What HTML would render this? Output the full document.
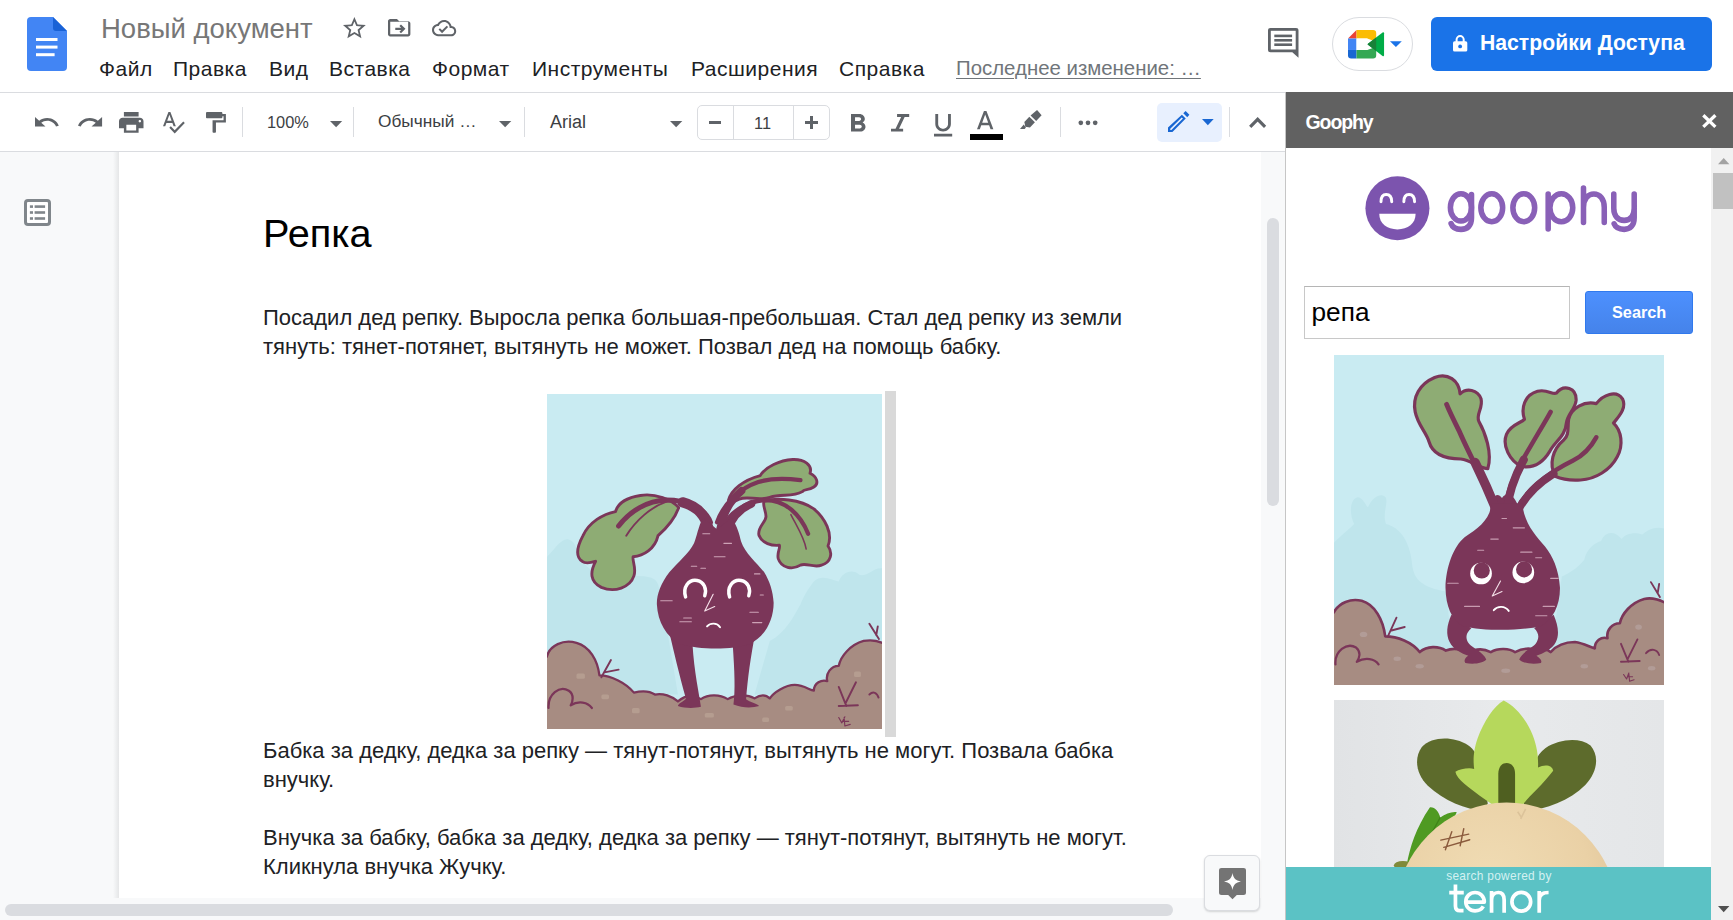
<!DOCTYPE html>
<html lang="ru">
<head>
<meta charset="utf-8">
<title>Новый документ – Google Документы</title>
<style>
*{box-sizing:border-box;margin:0;padding:0}
html,body{width:1733px;height:920px;overflow:hidden;background:#fff}
body{font-family:"Liberation Sans",sans-serif;color:#202124;position:relative}
.abs{position:absolute}
.t{position:absolute;white-space:nowrap;line-height:1}
svg{position:absolute;overflow:visible}
/* header */
#hdr{left:0;top:0;width:1733px;height:93px;background:#fff;border-bottom:1px solid #dadce0}
#title{left:101px;top:15px;font-size:27.5px;color:#777}
.menu{top:58px;font-size:21px;color:#202124;letter-spacing:.5px}
#last{left:956px;top:58px;font-size:20.4px;color:#70757a;text-decoration:underline;text-decoration-thickness:1px;text-underline-offset:3px}
#meet{left:1332px;top:17px;width:81px;height:54px;border:1px solid #dadce0;border-radius:27px;background:#fff}
#share{left:1431px;top:17px;width:281px;height:54px;background:#1a73e8;border-radius:6px}
#sharetxt{left:1480px;top:32px;font-size:21.2px;font-weight:700;color:#fff}
/* toolbar */
#tb{left:0;top:93px;width:1286px;height:59px;background:#fff;border-bottom:1px solid #dadce0}
.sep{width:1px;top:107px;height:30px;background:#dadce0}
.tbt{top:113px;color:#3c4043}
#fsbox{left:697px;top:105px;width:133px;height:35px;border:1px solid #dadce0;border-radius:5px}
#fsbox i{position:absolute;top:0;width:1px;height:33px;background:#dadce0}
#editbtn{left:1157px;top:103px;width:65px;height:39px;background:#e8f0fe;border-radius:5px}
/* doc area */
#bg{left:0;top:152px;width:1286px;height:768px;background:#f8f9fa}
#page{left:119px;top:152px;width:1142px;height:746px;background:#fff}
#pgsh{left:113px;top:152px;width:6px;height:746px;background:linear-gradient(90deg,rgba(60,64,67,0),rgba(60,64,67,.10))}
#vthumb{left:1267px;top:218px;width:12px;height:288px;background:#dadce0;border-radius:6px}
#hthumb{left:5px;top:904px;width:1168px;height:12px;background:#dadce0;border-radius:6px}
#h1{left:263px;top:214px;font-size:39.7px;color:#000}
.p{left:263px;font-size:22px;color:#202124;letter-spacing:-.003px}
#sel{left:885px;top:391px;width:11px;height:346px;background:#d9d9d9}
#explore{left:1204px;top:855px;width:56px;height:56px;background:#f8f9fa;border:1px solid #dadce0;border-radius:6px;box-shadow:0 1px 2px rgba(60,64,67,.2)}
/* sidebar */
#sb{left:1285px;top:92px;width:448px;height:828px;background:#fff;border-left:1px solid #c6c6c6}
#sbh{left:1286px;top:92px;width:447px;height:56px;background:#616161}
#sbt{left:1305.5px;top:112.5px;font-size:19.5px;font-weight:700;color:#fff;letter-spacing:-1.1px}
#sbscroll{left:1711px;top:148px;width:22px;height:772px;background:#f1f1f1}
#sbthumb{left:1713px;top:173px;width:20px;height:35.700px;background:#c1c1c1}
#inp{left:1304px;top:286px;width:266px;height:53px;border:1px solid #c8c8c8;border-top-color:#b5b5b5;background:#fff}
#inptxt{left:1311.5px;top:299px;font-size:26.25px;color:#000}
#sbtn{left:1585px;top:291px;width:108px;height:43px;background:linear-gradient(#4d90fe,#4583ea);border:1px solid #3079ed;border-radius:3px}
#sbtntxt{left:1612px;top:304px;font-size:16.3px;font-weight:700;color:#fff}
#tenor{left:1286px;top:867px;width:425px;height:53px;background:#5bc2c5}
#tn1{left:1446px;top:870.5px;width:106px;text-align:center;font-size:11.9px;color:#d4f1f1;letter-spacing:.3px}
#tn2{left:1447px;top:873px;font-size:44px;color:#fff;letter-spacing:-.6px}
</style>
</head>
<body>
<!-- ===== header ===== -->
<div id="hdr" class="abs"></div>
<div id="title" class="t">Новый документ</div>
<div class="t menu" style="left:99px">Файл</div>
<div class="t menu" style="left:173px">Правка</div>
<div class="t menu" style="left:269px">Вид</div>
<div class="t menu" style="left:329px">Вставка</div>
<div class="t menu" style="left:432px">Формат</div>
<div class="t menu" style="left:532px">Инструменты</div>
<div class="t menu" style="left:691px">Расширения</div>
<div class="t menu" style="left:839px">Справка</div>
<div id="last" class="t">Последнее изменение: …</div>
<div id="meet" class="abs"></div>
<div id="share" class="abs"></div>
<div id="sharetxt" class="t">Настройки Доступа</div>
<!-- HEADER-ICONS-START -->
<!-- docs logo -->
<svg style="left:27px;top:17px" width="40" height="54" viewBox="0 0 40 54"><path d="M4 0H26L40 14V50a4 4 0 0 1-4 4H4a4 4 0 0 1-4-4V4a4 4 0 0 1 4-4Z" fill="#4285f4"/><path d="M26 0L40 14H29a3 3 0 0 1-3-3Z" fill="#1a62d6"/><rect x="9" y="21" width="21.5" height="3" fill="#fff"/><rect x="9" y="28.6" width="21.5" height="3" fill="#fff"/><rect x="9" y="36.2" width="18.6" height="3" fill="#fff"/></svg>
<!-- star -->
<svg style="left:343px;top:16.8px" width="22.8" height="21.3" viewBox="2 2 20 19" preserveAspectRatio="none"><path fill="#5f6368" d="M22 9.24l-7.19-.62L12 2 9.19 8.63 2 9.24l5.46 4.73L5.82 21 12 17.27 18.18 21l-1.63-7.03L22 9.24zM12 15.4l-3.76 2.27 1-4.28-3.32-2.88 4.38-.38L12 6.1l1.71 4.04 4.38.38-3.32 2.88 1 4.28L12 15.4z"/></svg>
<!-- move folder -->
<svg style="left:387.6px;top:18.7px" width="22.4" height="17.5" viewBox="2 4 20 16" preserveAspectRatio="none"><path fill="#5f6368" d="M20 6h-8l-2-2H4c-1.1 0-2 .9-2 2v12c0 1.1.9 2 2 2h16c1.1 0 2-.9 2-2V8c0-1.1-.9-2-2-2zm0 12H4V6.5h16V18zM12.2 15.6l1.4 1.4 4-4-4-4-1.4 1.4 1.6 1.6H8.5v2h5.3l-1.6 1.6z"/></svg>
<!-- cloud done -->
<svg style="left:432.4px;top:20px" width="24.2" height="16.2" viewBox="0 4 24 16" preserveAspectRatio="none"><path fill="#5f6368" d="M19.35 10.04C18.67 6.59 15.64 4 12 4 9.11 4 6.6 5.64 5.35 8.04 2.34 8.36 0 10.91 0 14c0 3.31 2.69 6 6 6h13c2.76 0 5-2.24 5-5 0-2.64-2.05-4.78-4.65-4.96zM19 18H6c-2.21 0-4-1.79-4-4s1.79-4 4-4h.71C7.37 7.69 9.48 6 12 6c3.04 0 5.5 2.46 5.5 5.5v.5H19c1.66 0 3 1.34 3 3s-1.34 3-3 3zm-9-3.82l-2.09-2.09L6.5 13.5 10 17l6.01-6.01-1.41-1.41z"/></svg>
<!-- comments -->
<svg style="left:1267.7px;top:28.2px" width="30.5" height="29.8" viewBox="0 0 30.5 29.8"><path d="M2.5 0H28a2.5 2.5 0 0 1 2.5 2.5V29.8L24.3 24.3H2.5A2.5 2.5 0 0 1 0 21.8V2.5A2.5 2.5 0 0 1 2.5 0Z" fill="#5f6368"/><rect x="2.8" y="2.8" width="24.9" height="18.7" fill="#fff"/><rect x="6.3" y="6.6" width="17.8" height="2.6" fill="#5f6368"/><rect x="6.3" y="11" width="17.8" height="2.6" fill="#5f6368"/><rect x="6.3" y="15.4" width="17.8" height="2.6" fill="#5f6368"/></svg>
<!-- meet -->
<svg style="left:1348px;top:30px" width="36.1" height="28.5" viewBox="733 158 284 224" preserveAspectRatio="none">
<path d="M733 225L800 158V225Z" fill="#ea4335"/>
<path d="M800 158H930a25 25 0 0 1 25 25V250L885 225H800Z" fill="#fbbc04"/>
<rect x="733" y="225" width="67" height="90" fill="#4285f4"/>
<path d="M733 315H800V382H758a25 25 0 0 1-25-25Z" fill="#1967d2"/>
<path d="M800 315H885L955 290V357a25 25 0 0 1-25 25H800Z" fill="#34a853"/>
<path d="M885 270L1005 178a8 8 0 0 1 12 6V356a8 8 0 0 1-12 6Z" fill="#00ac47"/>
<path d="M885 270L955 216V324Z" fill="#188038"/>
<rect x="800" y="225" width="85" height="90" fill="#fff"/>
</svg>
<svg style="left:1390.2px;top:40.8px" width="11.8" height="6.2" viewBox="0 0 12 6"><path d="M0 0H12L6 6Z" fill="#1a73e8"/></svg>
<!-- lock -->
<svg style="left:1452.7px;top:35.4px" width="14.3" height="16.5" viewBox="0 0 14.3 16.5"><path d="M3.6 7V4.6a3.55 3.55 0 0 1 7.1 0V7" fill="none" stroke="#fff" stroke-width="2"/><rect x="0" y="6.3" width="14.3" height="10.2" rx="1.6" fill="#fff"/><circle cx="7.15" cy="11.4" r="1.9" fill="#1a73e8"/></svg>
<!-- HEADER-ICONS-END -->

<!-- ===== toolbar ===== -->
<div id="tb" class="abs"></div>
<div class="abs sep" style="left:242px"></div>
<div class="abs sep" style="left:353px"></div>
<div class="abs sep" style="left:524px"></div>
<div class="abs sep" style="left:1060px"></div>
<div class="abs sep" style="left:1229px"></div>
<div class="t tbt" style="left:267px;top:114px;font-size:16.4px">100%</div>
<div class="t tbt" style="left:378px;font-size:17.3px">Обычный …</div>
<div class="t tbt" style="left:550px;font-size:18px">Arial</div>
<div id="fsbox" class="abs"><i style="left:35px"></i><i style="left:95px"></i></div>
<div class="t tbt" style="left:754px;top:115px;font-size:16.4px">11</div>
<div id="editbtn" class="abs"></div>
<!-- TOOLBAR-ICONS-START -->
<!-- undo -->
<svg style="left:35.2px;top:116.9px" width="23.8" height="10.1" viewBox="2 7 20.5 9.5" preserveAspectRatio="none"><path fill="#5f6368" d="M12.5 8c-2.65 0-5.05.99-6.9 2.6L2 7v9h9l-3.62-3.62c1.39-1.16 3.16-1.88 5.12-1.88 3.54 0 6.55 2.31 7.6 5.5l2.37-.78C21.08 11.03 17.15 8 12.5 8z"/></svg>
<!-- redo -->
<svg style="left:77.7px;top:116.9px" width="24.1" height="10.1" viewBox="1.5 7 20.5 9.5" preserveAspectRatio="none"><path fill="#5f6368" d="M18.4 10.6C16.55 8.99 14.15 8 11.5 8c-4.65 0-8.58 3.03-9.96 7.22L3.9 16c1.05-3.19 4.05-5.5 7.6-5.5 1.95 0 3.73.72 5.12 1.88L13 16h9V7l-3.6 3.6z"/></svg>
<!-- print -->
<svg style="left:119.2px;top:112px" width="24.5" height="20.8" viewBox="2 3 20 18" preserveAspectRatio="none"><path fill="#5f6368" d="M19 8H5c-1.66 0-3 1.34-3 3v6h4v4h12v-4h4v-6c0-1.66-1.34-3-3-3zm-3 11H8v-5h8v5zm3-7c-.55 0-1-.45-1-1s.45-1 1-1 1 .45 1 1-.45 1-1 1zm-1-9H6v4h12V3z"/></svg>
<!-- spellcheck -->
<svg style="left:163.4px;top:112.4px" width="21.8" height="21.4" viewBox="2.46 3 20.54 19.5" preserveAspectRatio="none"><path fill="#5f6368" d="M12.45 16h2.09L9.43 3H7.57L2.46 16h2.09l1.12-3h5.64l1.14 3zm-6.02-5L8.5 5.48 10.57 11H6.43zm15.16.59l-8.09 8.09L9.83 16l-1.41 1.41 5.09 5.09L23 13l-1.41-1.41z"/></svg>
<!-- paint format -->
<svg style="left:206.3px;top:112px" width="19.9" height="20.8" viewBox="4 2 17 20" preserveAspectRatio="none"><path fill="#5f6368" d="M18 4V3c0-.55-.45-1-1-1H5c-.55 0-1 .45-1 1v4c0 .55.45 1 1 1h12c.55 0 1-.45 1-1V6h1v4H9.600v11c0 .55.45 1 1 1h.900c.55 0 1-.45 1-1v-9H21V4h-3z"/></svg>
<!-- dropdown arrows -->
<svg style="left:329.5px;top:120.5px" width="12.2" height="6.2" viewBox="0 0 12 6" preserveAspectRatio="none"><path d="M0 0H12L6 6Z" fill="#5f6368"/></svg>
<svg style="left:498.7px;top:120.5px" width="12.3" height="6.2" viewBox="0 0 12 6" preserveAspectRatio="none"><path d="M0 0H12L6 6Z" fill="#5f6368"/></svg>
<svg style="left:669.5px;top:120.5px" width="12.3" height="6.2" viewBox="0 0 12 6" preserveAspectRatio="none"><path d="M0 0H12L6 6Z" fill="#5f6368"/></svg>
<!-- minus / plus -->
<div class="abs" style="left:709px;top:121px;width:12px;height:2.6px;background:#5f6368"></div>
<div class="abs" style="left:805px;top:121px;width:12.7px;height:2.6px;background:#5f6368"></div>
<div class="abs" style="left:810px;top:116px;width:2.6px;height:12.7px;background:#5f6368"></div>
<!-- B -->
<svg style="left:850.8px;top:114px" width="14.5" height="17.6" viewBox="7 4 10.75 14" preserveAspectRatio="none"><path fill="#5f6368" d="M15.6 10.79c.97-.67 1.65-1.77 1.65-2.79 0-2.26-1.75-4-4-4H7v14h7.04c2.09 0 3.71-1.7 3.71-3.79 0-1.52-.86-2.82-2.15-3.42zM10 6.5h3c.83 0 1.5.67 1.5 1.5s-.67 1.5-1.5 1.5h-3v-3zm3.5 9H10v-3h3.5c.83 0 1.5.67 1.5 1.5s-.67 1.5-1.5 1.5z"/></svg>
<!-- I -->
<svg style="left:891.4px;top:114px" width="18.2" height="17.6" viewBox="6 4 12 14" preserveAspectRatio="none"><path fill="#5f6368" d="M10 4v2.300h2.700l-3.700 9.400H6V18h8v-2.300h-2.700l3.700-9.400H18V4z"/></svg>
<!-- U -->
<svg style="left:933.5px;top:113.7px" width="18.2" height="22.4" viewBox="5 3 14 18" preserveAspectRatio="none"><path fill="#5f6368" d="M12 17c3.31 0 6-2.69 6-6V3h-2.2v8c0 2.1-1.7 3.8-3.8 3.8S8.200 13.100 8.200 11V3H6v8c0 3.31 2.690 6 6 6zm-7 1.900V21h14v-2.100H5z"/></svg>
<!-- A -->
<svg style="left:977px;top:110.6px" width="16.4" height="18.2" viewBox="5.5 3 13 14" preserveAspectRatio="none"><path fill="#5f6368" d="M11 3L5.5 17h2.250l1.120-3h6.250l1.120 3h2.250L13 3h-2zm-1.380 9L12 5.670 14.380 12H9.620z"/></svg>
<div class="abs" style="left:970px;top:134px;width:33px;height:6px;background:#000"></div>
<!-- highlighter -->
<svg style="left:1020.4px;top:110.1px" width="21.6" height="19" viewBox="1158 65 139 122" preserveAspectRatio="none"><g fill="#5f6368"><path d="M1268 65L1297 98L1262 136L1226 100Z"/><path d="M1218 108L1254 144L1222 178L1192 172L1186 142Z"/><path d="M1182 158L1196 178L1188 187H1158Z"/></g></svg>
<!-- more -->
<svg style="left:1078.4px;top:119.8px" width="20" height="5.6" viewBox="0 0 20 5.6"><g fill="#5f6368"><circle cx="2.800" cy="2.800" r="2.350"/><circle cx="10" cy="2.800" r="2.350"/><circle cx="17.200" cy="2.800" r="2.350"/></g></svg>
<!-- pencil -->
<svg style="left:1167.8px;top:110.9px" width="21.4" height="21" viewBox="220 160 265 260" preserveAspectRatio="none"><g fill="#1967d2"><path d="M438 160L485 207L458 236L410 188Z"/><path fill-rule="evenodd" d="M392 205L440 253L275 420H220V365ZM390 240L248 381V394H262L405 253Z"/></g></svg>
<svg style="left:1202.1px;top:118.8px" width="11.7" height="6.3" viewBox="0 0 12 6" preserveAspectRatio="none"><path d="M0 0H12L6 6Z" fill="#1967d2"/></svg>
<!-- chevron up -->
<svg style="left:1249px;top:117px" width="17.3" height="11" viewBox="0 0 17.3 11"><path d="M1.200 9.900L8.650 2.300L16.100 9.900" fill="none" stroke="#5f6368" stroke-width="3.100"/></svg>
<!-- TOOLBAR-ICONS-END -->

<!-- ===== document ===== -->
<div id="bg" class="abs"></div>
<div id="page" class="abs"></div>
<div id="pgsh" class="abs"></div>
<div id="vthumb" class="abs"></div>
<div id="hthumb" class="abs"></div>
<div id="h1" class="t">Репка</div>
<div class="t p" style="top:307px">Посадил дед репку. Выросла репка большая-пребольшая. Стал дед репку из земли</div>
<div class="t p" style="top:336px">тянуть: тянет-потянет, вытянуть не может. Позвал дед на помощь бабку.</div>
<div class="t p" style="top:740px">Бабка за дедку, дедка за репку — тянут-потянут, вытянуть не могут. Позвала бабка</div>
<div class="t p" style="top:769px">внучку.</div>
<div class="t p" style="top:827px">Внучка за бабку, бабка за дедку, дедка за репку — тянут-потянут, вытянуть не могут.</div>
<div class="t p" style="top:856px">Кликнула внучка Жучку.</div>
<div id="sel" class="abs"></div>
<!-- DOC-IMAGE-START -->
<svg id="docimg" style="left:547px;top:394px" width="335" height="335" viewBox="18 15 875 875" preserveAspectRatio="none">
<defs><clipPath id="c1"><rect x="18" y="15" width="875" height="875"/></clipPath></defs>
<g clip-path="url(#c1)" stroke-linejoin="round" stroke-linecap="round">
<rect x="18" y="15" width="875" height="875" fill="#c9ebf2"/>
<!-- distant hills -->
<path d="M18 440 C40 420 55 390 75 395 C95 400 95 430 110 450 C125 475 150 488 190 490 C240 492 280 485 300 500 C320 520 310 560 330 620 L360 800 L18 800Z" fill="#bfe5ec"/>
<path d="M893 470 C870 468 860 490 835 488 C815 470 790 480 780 505 C760 500 735 485 715 505 C700 525 690 540 680 565 C660 600 640 640 600 660 L560 800 L893 800Z" fill="#bfe5ec"/>
<!-- left leaf -->
<path d="M362 312 C345 290 300 274 262 280 C235 284 205 295 197 322 C165 328 128 350 112 385 C96 415 92 440 110 452 C120 460 135 455 145 452 C130 480 130 505 160 520 C195 535 235 520 245 490 C252 470 240 450 243 440 C270 438 300 420 308 385 C325 370 350 345 362 312Z" fill="#8eac74" stroke="#7b3659" stroke-width="7.5"/>
<!-- upper right leaf -->
<path d="M492 292 C500 265 530 240 575 228 C590 205 625 188 660 186 C690 185 712 200 705 222 C722 230 730 248 715 258 C700 268 690 262 685 270 C660 285 630 275 600 285 C570 295 540 280 520 290 C508 296 498 300 492 292Z" fill="#8eac74" stroke="#7b3659" stroke-width="7.5"/>
<!-- lower right leaf -->
<path d="M585 295 C620 285 680 290 715 315 C745 340 765 380 752 412 C765 430 760 455 735 462 C715 470 695 455 680 462 C660 475 630 470 622 445 C618 430 628 418 625 410 C605 412 580 405 572 385 C565 365 590 350 590 335 C590 320 580 305 585 295Z" fill="#8eac74" stroke="#7b3659" stroke-width="7.5"/>
<!-- stems -->
<path d="M445 350 C430 310 380 292 330 292 C280 294 235 320 205 360" fill="none" stroke="#7b3659" stroke-width="13"/>
<path d="M330 296 C290 310 250 345 225 385" fill="none" stroke="#7b3659" stroke-width="5"/>
<path d="M462 350 C480 300 520 262 570 245 C610 232 650 236 680 240" fill="none" stroke="#7b3659" stroke-width="11"/>
<path d="M478 360 C500 320 540 295 590 292 C640 292 680 330 700 380" fill="none" stroke="#7b3659" stroke-width="11"/>
<path d="M655 330 C670 360 690 390 695 420" fill="none" stroke="#7b3659" stroke-width="4"/>
<!-- ground -->
<path d="M18 700 C25 672 60 655 95 665 C130 675 150 710 155 750 C185 750 225 770 245 795 C265 790 285 790 300 800 C320 795 345 805 360 818 C380 800 400 800 420 812 C440 798 470 800 490 812 C510 800 540 798 560 810 C575 800 590 800 600 810 C610 795 640 775 665 775 C690 775 705 790 715 790 C715 770 735 760 750 765 C745 745 760 725 780 725 C785 700 810 670 845 660 C870 655 885 660 900 668 L900 900 L10 900 L10 700Z" fill="#a78c82"/>
<path d="M10 712 L18 700 C25 672 60 655 95 665 C130 675 150 710 155 750 C185 750 225 770 245 795 C265 790 285 790 300 800 C320 795 345 805 360 818 C380 800 400 800 420 812 C440 798 470 800 490 812 C510 800 540 798 560 810 C575 800 590 800 600 810 C610 795 640 775 665 775 C690 775 705 790 715 790 C715 770 735 760 750 765 C745 745 760 725 780 725 C785 700 810 670 845 660 C870 655 885 660 900 668" fill="none" stroke="#7b3659" stroke-width="6"/>
<path d="M440 368 C432 330 410 308 372 298" fill="none" stroke="#7b3659" stroke-width="27"/>
<path d="M470 368 C478 325 498 292 526 268" fill="none" stroke="#7b3659" stroke-width="20"/>
<path d="M490 372 C500 340 522 315 552 302" fill="none" stroke="#7b3659" stroke-width="20"/>
<!-- legs -->
<path d="M338 640 C350 690 362 743 381 811 C372 820 360 824 360 830 C380 837 405 836 420 832 C416 800 402 740 398 668Z" fill="#7b3659"/>
<path d="M503 668 C508 740 510 790 505 826 C530 836 555 835 572 830 C566 822 548 820 538 812 C542 760 550 700 562 640Z" fill="#7b3659"/>
<!-- body -->
<path d="M425 338 C412 365 410 385 402 405 C390 430 360 455 338 480 C315 510 304 540 305 565 C307 610 330 650 365 668 C420 684 500 684 548 668 C588 648 610 605 610 560 C608 530 600 505 585 480 C565 455 535 430 525 400 C520 380 516 362 500 338 L462 368Z" fill="#7b3659"/>
<!-- texture -->
<g stroke="#e9c7d6" stroke-width="3" opacity=".75"><path d="M425 380h18M455 440h28M395 465h14M420 470h12M560 485h14M315 555h30M375 600h20M365 610h30M548 585h22M555 612h24M480 405h20M575 540h8"/></g>
<!-- face -->
<path d="M380 545 C372 520 388 498 410 502 C428 505 436 525 430 542" fill="none" stroke="#fff" stroke-width="9"/>
<path d="M495 545 C487 520 503 498 525 502 C543 505 551 525 545 542" fill="none" stroke="#fff" stroke-width="9"/>
<path d="M452 538 L430 582 L456 570" fill="none" stroke="#f4dfe8" stroke-width="3"/>
<path d="M436 622 C445 612 462 612 470 624" fill="none" stroke="#fff" stroke-width="5"/>
<path d="M22 835 C20 800 50 775 75 790 C90 800 85 820 80 828 C100 815 125 820 135 835" fill="none" stroke="#7b3659" stroke-width="6"/>
<path d="M160 755 L185 710 M168 742 L205 735" fill="none" stroke="#7b3659" stroke-width="5"/>
<path d="M885 655 L860 615 M878 645 L882 622" fill="none" stroke="#7b3659" stroke-width="5"/>
<path d="M800 830 L780 780 M798 822 L825 768 M780 830 L830 828" fill="none" stroke="#7b3659" stroke-width="5"/>
<path d="M860 800 C870 790 880 795 884 808" fill="none" stroke="#7b3659" stroke-width="5"/>
<path d="M780 860 l8 14 l8 -16 m-2 2 l2 22 l14 -4 m-18 -8 l14 0" fill="none" stroke="#7b3659" stroke-width="3"/>
<g fill="#b59d90"><rect x="95" y="745" width="22" height="14" rx="4"/><rect x="240" y="835" width="20" height="14" rx="4"/><rect x="430" y="848" width="24" height="12" rx="4"/><rect x="640" y="830" width="20" height="12" rx="4"/><rect x="820" y="740" width="18" height="14" rx="4"/><rect x="160" y="800" width="20" height="12" rx="4"/><rect x="580" y="860" width="18" height="12" rx="4"/></g>
</g></svg>
<!-- DOC-IMAGE-END -->
<div id="explore" class="abs"></div>
<!-- DOC-ICONS-START -->
<!-- outline -->
<svg style="left:23.5px;top:198.8px" width="27" height="27" viewBox="0 0 27 27"><rect x="1.5" y="1.5" width="24" height="24" rx="2.500" fill="#fff" stroke="#80868b" stroke-width="3"/><g fill="#80868b"><rect x="5.900" y="6.300" width="3.100" height="2.600"/><rect x="10.600" y="6.300" width="10.500" height="2.600"/><rect x="5.900" y="12.200" width="3.100" height="2.600"/><rect x="10.600" y="12.200" width="10.500" height="2.600"/><rect x="5.900" y="18.200" width="3.100" height="2.600"/><rect x="10.600" y="18.200" width="10.500" height="2.600"/></g></svg>
<!-- explore -->
<svg style="left:1218.600px;top:867.800px" width="27" height="31.300" viewBox="0 0 27 31.300"><path d="M2.500 0H24.500A2.500 2.500 0 0 1 27 2.500V24.500A2.500 2.500 0 0 1 24.500 27H17.800L13.500 31.300L9.200 27H2.500A2.500 2.500 0 0 1 0 24.500V2.500A2.500 2.500 0 0 1 2.500 0Z" fill="#747474"/><path d="M13.500 5C14.500 10.500 16.500 12.500 22 13.500C16.500 14.500 14.500 16.500 13.500 22C12.500 16.500 10.500 14.500 5 13.500C10.500 12.500 12.500 10.500 13.500 5Z" fill="#fff"/></svg>
<!-- DOC-ICONS-END -->

<!-- ===== sidebar ===== -->
<div id="sb" class="abs"></div>
<!-- SB-IMG1-START -->
<svg id="sbimg1" style="left:1334px;top:355px" width="330" height="330" viewBox="21 18 882 882" preserveAspectRatio="none">
<defs><clipPath id="c2"><rect x="21" y="18" width="882" height="882"/></clipPath></defs>
<g clip-path="url(#c2)" stroke-linejoin="round" stroke-linecap="round">
<rect x="21" y="18" width="882" height="882" fill="#c9ebf2"/>
<!-- distant hills -->
<path d="M21 520 C40 500 55 490 75 470 C60 440 65 400 85 398 C100 400 105 420 112 425 C125 395 150 385 160 400 C165 420 150 440 160 470 C200 480 225 520 230 580 C235 620 260 640 320 650 L340 820 L21 820Z" fill="#bfe5ec"/>
<path d="M903 482 C880 475 860 485 845 498 C825 490 800 495 790 510 C770 485 745 490 735 515 C715 520 695 540 690 565 C670 590 650 600 630 610 L600 820 L903 820Z" fill="#bfe5ec"/>
<!-- left leaf -->
<path d="M432 322 C400 318 390 300 360 296 C320 296 285 285 275 250 C268 225 245 205 238 170 C230 130 250 95 290 78 C325 65 355 85 358 122 C375 105 405 110 414 135 C420 160 400 175 408 195 C425 225 445 280 432 322Z" fill="#8eac74" stroke="#7b3659" stroke-width="8.5"/>
<!-- middle leaf -->
<path d="M522 316 C490 300 470 260 482 230 C492 205 520 200 530 190 C520 160 530 125 565 115 C590 108 605 125 615 120 C635 95 670 105 668 140 C665 165 645 175 642 200 C640 235 610 250 598 275 C580 305 555 322 522 316Z" fill="#8eac74" stroke="#7b3659" stroke-width="8.5"/>
<!-- right leaf -->
<path d="M612 342 C595 310 605 270 635 245 C650 232 645 215 648 190 C655 160 690 140 722 148 C740 125 775 110 792 135 C805 160 780 185 768 200 C790 220 795 260 778 290 C760 325 720 350 680 352 C655 354 630 350 612 342Z" fill="#8eac74" stroke="#7b3659" stroke-width="8.5"/>
<!-- stems -->
<path d="M455 430 C425 360 385 290 355 220 C340 190 330 170 322 150" fill="none" stroke="#7b3659" stroke-width="13"/>
<path d="M480 420 C490 350 530 290 565 230 C580 205 592 185 600 170" fill="none" stroke="#7b3659" stroke-width="12"/>
<path d="M510 430 C540 370 600 330 660 300 C690 285 710 260 722 238" fill="none" stroke="#7b3659" stroke-width="12"/>
<path d="M438 440 C440 400 455 380 470 400 C485 380 505 390 520 440Z" fill="#7b3659"/>
<!-- ground -->
<path d="M21 705 C35 680 65 668 95 675 C130 685 152 725 158 770 C190 770 230 785 250 812 C270 795 300 795 320 808 C345 798 365 806 380 815 C400 802 420 802 440 812 C460 800 490 802 505 812 C525 802 550 800 570 810 C580 804 592 804 600 812 C615 795 640 785 665 785 C690 788 705 800 718 802 C718 782 735 770 752 775 C748 752 765 735 785 735 C790 710 815 680 850 670 C875 665 892 672 910 682 L910 910 L10 910 L10 705Z" fill="#a78c82"/>
<path d="M10 718 L21 705 C35 680 65 668 95 675 C130 685 152 725 158 770 C190 770 230 785 250 812 C270 795 300 795 320 808 C345 798 365 806 380 815 C400 802 420 802 440 812 C460 800 490 802 505 812 C525 802 550 800 570 810 C580 804 592 804 600 812 C615 795 640 785 665 785 C690 788 705 800 718 802 C718 782 735 770 752 775 C748 752 765 735 785 735 C790 710 815 680 850 670 C875 665 892 672 910 682" fill="none" stroke="#7b3659" stroke-width="7"/>
<path d="M460 445 C440 395 420 350 398 305" fill="none" stroke="#7b3659" stroke-width="25"/>
<path d="M483 435 C488 380 505 340 528 298" fill="none" stroke="#7b3659" stroke-width="22"/>
<path d="M510 440 C530 395 565 362 608 335" fill="none" stroke="#7b3659" stroke-width="21"/>
<!-- legs -->
<path d="M335 712 C322 740 320 765 330 785 C340 805 362 815 380 822 C370 828 368 836 372 841 C392 846 420 842 428 832 C420 812 390 800 382 790 C372 775 372 762 388 748Z" fill="#7b3659"/>
<path d="M608 712 C620 740 624 765 614 785 C604 805 580 815 562 822 C572 828 578 836 574 841 C554 846 524 842 516 832 C524 812 552 800 560 790 C570 775 570 762 556 748Z" fill="#7b3659"/>
<!-- body -->
<path d="M442 415 C438 458 408 480 370 505 C340 530 320 585 319 640 C320 690 335 725 365 742 C420 756 520 756 575 742 C605 725 625 690 625 640 C622 590 605 555 585 530 C560 500 530 470 524 415Z" fill="#7b3659"/>
<g stroke="#e9c7d6" stroke-width="3" opacity=".7"><path d="M500 480h30M440 510h20M405 540h16M520 545h30M560 560h16M325 628h28M600 615h20M370 690h40M580 690h30M560 715h30M470 455h12"/></g>
<!-- face -->
<circle cx="414" cy="602" r="29" fill="#fff"/><circle cx="416" cy="594" r="21.500" fill="#7b3659"/>
<circle cx="527" cy="599" r="29" fill="#fff"/><circle cx="529" cy="591" r="21.500" fill="#7b3659"/>
<path d="M466 622 L444 662 L470 650" fill="none" stroke="#f4dfe8" stroke-width="3"/>
<path d="M448 700 C458 688 478 688 488 702" fill="none" stroke="#fff" stroke-width="5"/>
<path d="M25 845 C22 810 55 785 80 800 C95 812 88 830 82 838 C105 825 130 830 140 845" fill="none" stroke="#7b3659" stroke-width="6"/>
<path d="M165 770 L188 720 M172 755 L210 745" fill="none" stroke="#7b3659" stroke-width="5"/>
<path d="M892 665 L868 625 M886 655 L890 630" fill="none" stroke="#7b3659" stroke-width="5"/>
<path d="M808 838 L788 790 M806 830 L832 778 M788 838 L838 836" fill="none" stroke="#7b3659" stroke-width="5"/>
<path d="M855 815 C868 800 885 805 890 820" fill="none" stroke="#7b3659" stroke-width="5"/>
<path d="M795 872 l8 12 l6 -16 m0 2 l2 20 l12 -4 m-16 -8 l12 0" fill="none" stroke="#7b3659" stroke-width="3"/>
<g fill="#b7a3a0" opacity=".7"><ellipse cx="100" cy="765" rx="10" ry="7"/><ellipse cx="190" cy="830" rx="10" ry="6"/><ellipse cx="250" cy="850" rx="11" ry="6"/><ellipse cx="480" cy="862" rx="12" ry="6"/><ellipse cx="690" cy="850" rx="10" ry="6"/><ellipse cx="835" cy="745" rx="9" ry="7"/><ellipse cx="870" cy="855" rx="10" ry="6"/></g>
</g></svg>
<!-- SB-IMG1-END -->
<!-- SB-IMG2-START -->
<svg id="sbimg2" style="left:1334px;top:700px" width="330" height="167" viewBox="40 40 1653 836.5" preserveAspectRatio="none">
<defs><clipPath id="c3"><rect x="40" y="40" width="1653" height="836.5"/></clipPath>
<linearGradient id="g3" x1="0" y1="0" x2="1" y2="0"><stop offset="0" stop-color="#e1e3e5"/><stop offset=".5" stop-color="#e8eaec"/><stop offset="1" stop-color="#e4e6e8"/></linearGradient>
<radialGradient id="g3b" cx=".42" cy=".35" r=".75"><stop offset="0" stop-color="#f0dcb4"/><stop offset=".6" stop-color="#ead1a6"/><stop offset="1" stop-color="#dcc096"/></radialGradient></defs>
<g clip-path="url(#c3)">
<rect x="40" y="40" width="1653" height="837" fill="url(#g3)"/>
<!-- dark leaves -->
<path d="M790 595 C700 590 590 545 510 470 C450 410 440 330 480 275 C530 220 640 220 710 265 C770 305 790 400 810 560Z" fill="#5d6b2c"/>
<path d="M1000 595 C1100 590 1220 545 1300 465 C1360 400 1370 320 1325 268 C1270 225 1170 235 1100 280 C1040 320 1020 420 990 560Z" fill="#5d6b2c"/>
<!-- light leaf -->
<path d="M890 42 C840 70 790 150 760 230 C735 300 738 350 742 385 C715 378 670 385 648 400 C655 440 720 480 770 520 L835 565 L985 565 C1020 520 1080 470 1138 395 C1135 365 1095 360 1062 378 C1064 330 1060 280 1035 215 C1005 140 950 70 890 42Z" fill="#b6d85c"/>
<path d="M863 560 L863 410 C863 370 885 355 905 355 C928 355 947 372 947 410 L947 560Z" fill="#4f5f20"/>
<!-- side leaf -->
<path d="M405 860 C420 780 450 680 520 578 C545 575 565 600 572 628 C600 610 630 598 655 602 C640 640 600 680 560 740 C520 800 480 850 450 880Z" fill="#4f9a22"/>
<path d="M572 628 C540 690 480 790 440 876" stroke="#3f8418" stroke-width="6" fill="none"/>
<ellipse cx="385" cy="868" rx="45" ry="22" fill="#7f8a3a"/>
<!-- body -->
<circle cx="905" cy="1110" r="556" fill="url(#g3b)"/>
<path d="M960 600 l20 30 m20 -45 l-25 50" stroke="#dcc39a" stroke-width="8" fill="none"/>
<!-- stitches -->
<g stroke="#8a5a3c" stroke-width="7" stroke-linecap="round" fill="none"><path d="M630 700 L598 790 M690 685 L672 770 M575 742 L715 712 M590 778 L720 740"/></g>
</g></svg>
<!-- SB-IMG2-END -->
<div id="sbh" class="abs"></div>
<div id="sbt" class="t">Goophy</div>
<div id="sbscroll" class="abs"></div>
<div id="sbthumb" class="abs"></div>
<!-- SB-LOGO-START -->
<svg id="logo" style="left:1355px;top:165px" width="300" height="90" viewBox="0 0 1733 520">
<circle cx="245" cy="250" r="185" fill="#7c54ae"/>
<path d="M140 282 H350 C350 340 305 372 245 372 C185 372 140 340 140 282Z" fill="#fff"/>
<path d="M150 212 C150 180 165 170 180 170 C197 170 212 180 212 212" fill="none" stroke="#fff" stroke-width="17" stroke-linecap="round"/>
<path d="M282 212 C282 180 297 170 312 170 C329 170 344 180 344 212" fill="none" stroke="#fff" stroke-width="17" stroke-linecap="round"/>
<g fill="none" stroke="#8960b7" stroke-width="32" stroke-linecap="round" stroke-linejoin="round">
<ellipse cx="612" cy="245" rx="61" ry="79"/>
<path d="M673 170 V305 C673 350 650 372 612 372 C583 372 562 358 555 338"/>
<ellipse cx="790" cy="247" rx="63" ry="81"/>
<ellipse cx="975" cy="247" rx="63" ry="81"/>
<path d="M1116 168 V370"/>
<ellipse cx="1192" cy="247" rx="66" ry="81"/>
<path d="M1320 133 V332 M1320 245 C1320 196 1346 168 1380 168 C1414 168 1440 196 1440 245 V332"/>
<path d="M1495 168 V250 C1495 296 1521 320 1555 320 C1589 320 1613 296 1613 250 M1613 168 V305 C1613 350 1590 372 1555 372 C1526 372 1504 358 1497 340"/>
</g></svg>
<!-- SB-LOGO-END -->
<div id="inp" class="abs"></div>
<div id="inptxt" class="t">репа</div>
<div id="sbtn" class="abs"></div>
<div id="sbtntxt" class="t">Search</div>
<div id="tenor" class="abs"></div>
<div id="tn1" class="t">search powered by</div>
<svg style="left:1430px;top:866px" width="140" height="54" viewBox="0 0 1733 668"><g fill="none" stroke="#fff" stroke-width="46" stroke-linecap="butt" stroke-linejoin="round">
<path d="M315 228 V495 C315 540 335 553 370 553 H415 M238 330 H418"/>
<path d="M446 446 H672 C672 375 620 328 558 328 C495 328 443 378 443 442 C443 505 495 556 558 556 C602 556 640 535 660 500"/>
<path d="M762 308 V578 M762 420 C762 365 795 328 845 328 C895 328 918 365 918 420 V578"/>
<circle cx="1130" cy="442" r="116"/>
<path d="M1352 308 V578 M1352 425 C1352 365 1390 328 1468 328"/>
</g></svg>
<!-- SB-ICONS-START -->
<!-- close X -->
<svg style="left:1702.300px;top:113.800px" width="14.700" height="14.200" viewBox="0 0 14.700 14.200"><path d="M1.300 1.300L13.400 12.900M13.400 1.300L1.300 12.900" stroke="#fff" stroke-width="3.300" fill="none"/></svg>
<!-- scroll arrows -->
<svg style="left:1717.800px;top:157.700px" width="11.400" height="6.200" viewBox="0 0 11 6" preserveAspectRatio="none"><path d="M0 6H11L5.500 0Z" fill="#a3a3a3"/></svg>
<svg style="left:1717.800px;top:906px" width="11.400" height="6.200" viewBox="0 0 11 6" preserveAspectRatio="none"><path d="M0 0H11L5.500 6Z" fill="#505050"/></svg>
<!-- SB-ICONS-END -->
</body>
</html>
